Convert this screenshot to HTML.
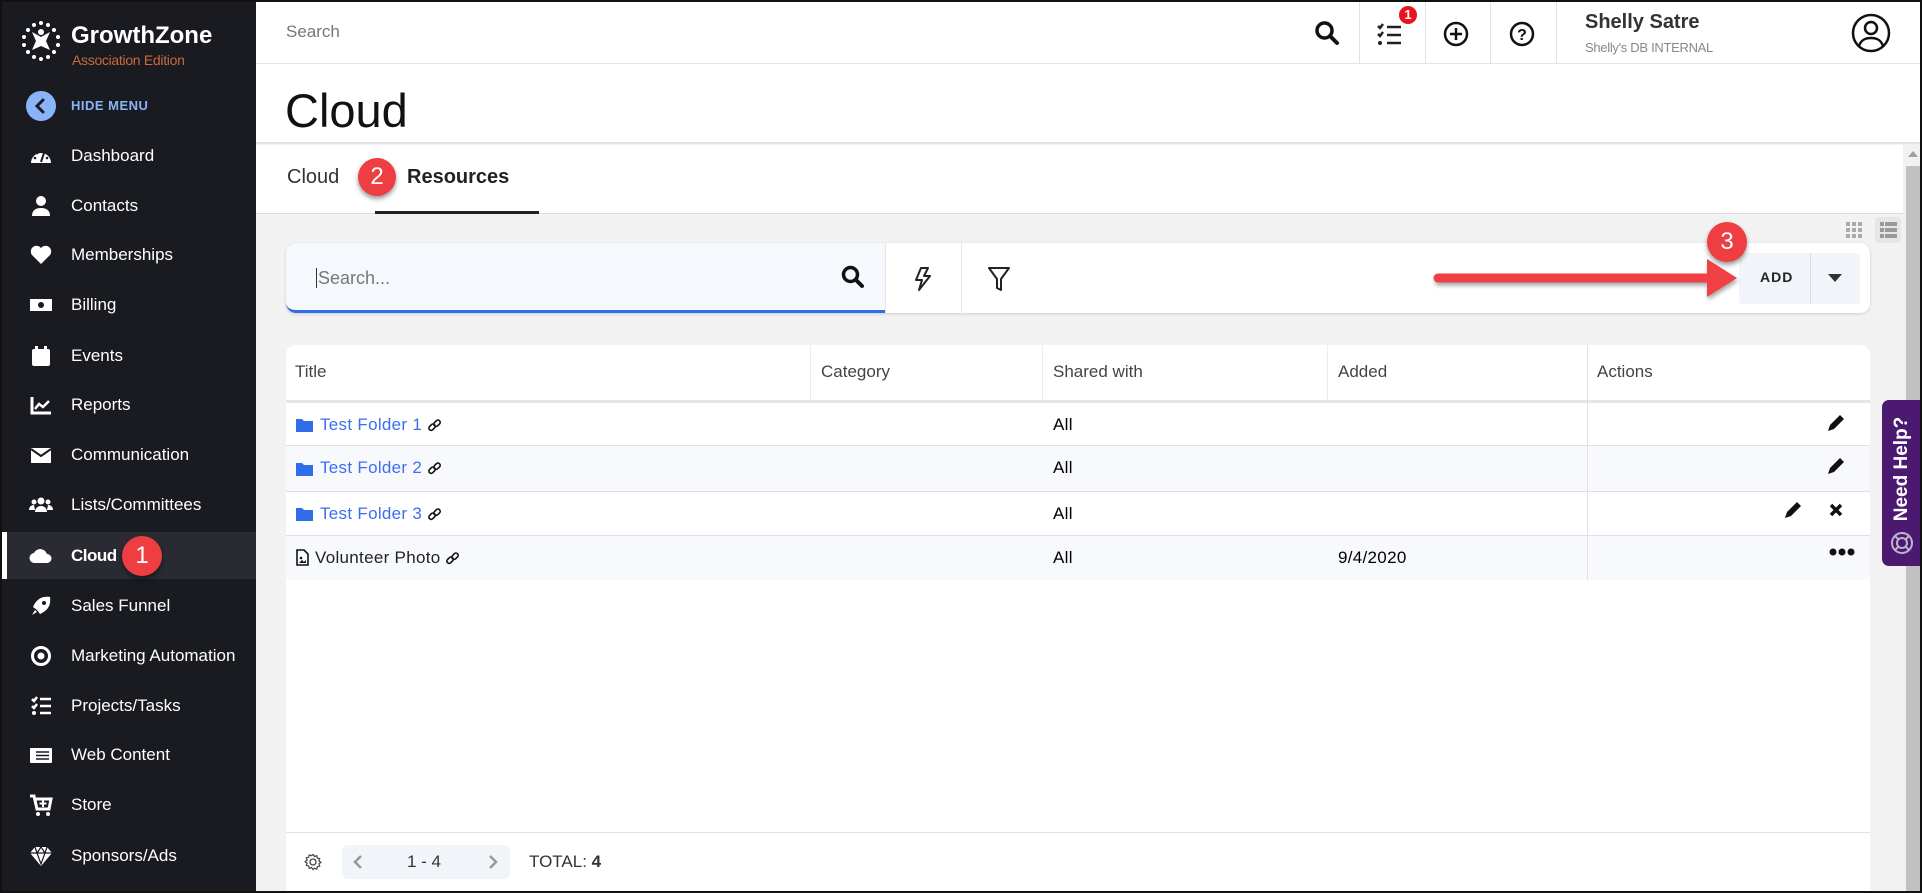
<!DOCTYPE html>
<html><head><meta charset="utf-8"><style>
*{box-sizing:border-box;margin:0;padding:0}
body{width:1922px;height:893px;overflow:hidden;font-family:"Liberation Sans",sans-serif;background:#f2f2f2;position:relative}
.abs{position:absolute}
#frame{position:absolute;left:0;top:0;width:1922px;height:893px;border:2px solid #111;pointer-events:none;z-index:50}
#side{left:0;top:0;width:256px;height:893px;background:#1a1b21;color:#fff}
.mi{position:absolute;left:0;width:256px;height:48px;display:flex;align-items:center;font-size:17px;color:#fff}
.mi svg{position:absolute;left:29px;width:24px;height:24px}
.mi span{position:absolute;left:71px}
.badge{position:absolute;border-radius:50%;background:#ef3e42;color:#fff;display:flex;align-items:center;justify-content:center;font-size:24px;box-shadow:0 3px 5px rgba(0,0,0,.4)}
.row{position:absolute;left:286px;width:1584px;height:44px;border-bottom:1px solid #dde0e4;font-size:17px}
.row .t{position:absolute;top:12px;letter-spacing:.3px;display:flex;align-items:center;white-space:nowrap}
.row .t svg{margin-left:5px}
.lnk{color:#3b6ef0}
.vd{position:absolute;width:1px;background:#e1e1e1}
</style></head><body>
<div id="frame"></div>
<div id="side" class="abs">
  <svg class="abs" style="left:20px;top:20px" width="42" height="42" viewBox="0 0 42 42"><g fill="#fff"><circle cx="21" cy="3" r="2"/><circle cx="28" cy="5" r="2"/><circle cx="14" cy="5" r="2"/><circle cx="34" cy="10" r="2"/><circle cx="8" cy="10" r="2"/><circle cx="38" cy="17" r="2"/><circle cx="4" cy="17" r="2"/><circle cx="38" cy="25" r="2"/><circle cx="4" cy="25" r="2"/><circle cx="34" cy="32" r="2"/><circle cx="8" cy="32" r="2"/><circle cx="28" cy="37" r="2"/><circle cx="14" cy="37" r="2"/><circle cx="21" cy="39" r="2"/><path d="M12 12 L21 17 L30 12 L26 21 L30 30 L21 26 L12 30 L16 21Z"/><circle cx="21" cy="12" r="3"/></g></svg>
  <div class="abs" style="left:71px;top:22px;font-size:24px;font-weight:bold;color:#fff">GrowthZone</div>
  <div class="abs" style="left:72px;top:52px;font-size:14px;color:#c8693a;letter-spacing:-.3px">Association Edition</div>
  <div class="abs" style="left:26px;top:91px;width:30px;height:30px;border-radius:50%;background:#8ab4f8"><svg width="30" height="30"><path d="M17 9 L11 15 L17 21" stroke="#1a1b21" stroke-width="3" fill="none" stroke-linecap="round"/></svg></div>
  <div class="abs" style="left:71px;top:98px;font-size:13px;font-weight:bold;color:#8ab4f8;letter-spacing:.5px">HIDE MENU</div>

  <div class="mi" style="top:132px"><svg viewBox="0 0 24 24"><path d="M2 19a10 10 0 1 1 20 0z" fill="#fff"/><path d="M12 18 L15 9" stroke="#1a1b21" stroke-width="2"/><circle cx="6" cy="14" r="1.3" fill="#1a1b21"/><circle cx="8" cy="9" r="1.3" fill="#1a1b21"/><circle cx="18" cy="14" r="1.3" fill="#1a1b21"/></svg><span>Dashboard</span></div>
  <div class="mi" style="top:182px"><svg viewBox="0 0 24 24"><circle cx="12" cy="7" r="5" fill="#fff"/><path d="M3 22c0-6 4-8 9-8s9 2 9 8z" fill="#fff"/></svg><span>Contacts</span></div>
  <div class="mi" style="top:231px"><svg viewBox="0 0 24 24"><path d="M12 21 L3 12 A5 5 0 0 1 12 5 A5 5 0 0 1 21 12Z" fill="#fff"/></svg><span>Memberships</span></div>
  <div class="mi" style="top:281px"><svg viewBox="0 0 24 24"><rect x="1" y="6" width="22" height="12" fill="#fff"/><circle cx="12" cy="12" r="3" fill="#1a1b21"/></svg><span>Billing</span></div>
  <div class="mi" style="top:332px"><svg viewBox="0 0 24 24"><rect x="3" y="5" width="18" height="17" rx="2" fill="#fff"/><rect x="6" y="2" width="3" height="5" fill="#fff"/><rect x="15" y="2" width="3" height="5" fill="#fff"/></svg><span>Events</span></div>
  <div class="mi" style="top:381px"><svg viewBox="0 0 24 24"><path d="M3 4 V20 H22" stroke="#fff" stroke-width="3" fill="none"/><path d="M6 16 L10 11 L14 14 L20 8" stroke="#fff" stroke-width="2.5" fill="none"/></svg><span>Reports</span></div>
  <div class="mi" style="top:431px"><svg viewBox="0 0 24 24"><rect x="2" y="5" width="20" height="15" fill="#fff"/><path d="M2 6 L12 13 L22 6" stroke="#1a1b21" stroke-width="2" fill="none"/></svg><span>Communication</span></div>
  <div class="mi" style="top:481px"><svg viewBox="0 0 24 24"><g fill="#fff"><circle cx="12" cy="8" r="3.5"/><circle cx="5" cy="9" r="2.5"/><circle cx="19" cy="9" r="2.5"/><path d="M6 19c0-4 3-6 6-6s6 2 6 6z"/><path d="M0 17c0-3 2-5 5-5l1 5z"/><path d="M24 17c0-3-2-5-5-5l-1 5z"/></g></svg><span>Lists/Committees</span></div>
  <div class="mi" style="top:532px;background:#2a2b32;height:47px"><div class="abs" style="left:2px;top:0;width:5px;height:47px;background:#fff"></div><svg viewBox="0 0 24 24"><path d="M6 19a5 5 0 0 1-1-10 7 7 0 0 1 13 1 4.5 4.5 0 0 1 0 9z" fill="#fff"/></svg><span style="font-weight:bold;letter-spacing:-.5px">Cloud</span></div>
  <div class="badge" style="left:122px;top:536px;width:40px;height:40px">1</div>
  <div class="mi" style="top:582px"><svg viewBox="0 0 24 24"><path d="M8 16 L4 13 C8 4 14 2 21 3 C22 10 20 16 11 20Z M3 21 L6 16 L8 18Z" fill="#fff"/><circle cx="15" cy="9" r="2" fill="#1a1b21"/></svg><span>Sales Funnel</span></div>
  <div class="mi" style="top:632px"><svg viewBox="0 0 24 24"><circle cx="12" cy="12" r="8.5" stroke="#fff" stroke-width="3" fill="none"/><circle cx="12" cy="12" r="3.5" fill="#fff"/></svg><span>Marketing Automation</span></div>
  <div class="mi" style="top:682px"><svg viewBox="0 0 24 24"><g stroke="#fff" stroke-width="2.5" fill="none"><path d="M3 5 L5 7 L8 3"/><path d="M3 12 L5 14 L8 10"/><path d="M11 5H22M11 12H22M11 19H22"/></g><circle cx="5" cy="19" r="2" fill="#fff"/></svg><span>Projects/Tasks</span></div>
  <div class="mi" style="top:731px"><svg viewBox="0 0 24 24"><rect x="1" y="5" width="22" height="15" rx="1" fill="#fff"/><path d="M7 9H20M7 12.5H20M7 16H20" stroke="#1a1b21" stroke-width="1.5"/></svg><span>Web Content</span></div>
  <div class="mi" style="top:781px"><svg viewBox="0 0 24 24"><path d="M1 3H5L8 16H20L22 6H6" stroke="#fff" stroke-width="3" fill="none"/><circle cx="9" cy="21" r="2" fill="#fff"/><circle cx="19" cy="21" r="2" fill="#fff"/><path d="M14 7V14M10.5 10.5H17.5" stroke="#fff" stroke-width="2"/></svg><span>Store</span></div>
  <div class="mi" style="top:832px"><svg viewBox="0 0 24 24"><path d="M6 3H18L23 9L12 22L1 9Z" fill="#fff"/><path d="M1 9H23M8 9L12 20L16 9M6 3L8 9L12 3L16 9L18 3" stroke="#1a1b21" stroke-width="1.2" fill="none"/></svg><span>Sponsors/Ads</span></div>
</div>

<!-- top bar -->
<div class="abs" style="left:256px;top:0;width:1666px;height:64px;background:#fff;border-bottom:1px solid #e4e4e4"></div>
<div class="abs" style="left:286px;top:22px;font-size:17px;color:#777">Search</div>
<svg class="abs" style="left:1314px;top:20px" width="26" height="26" viewBox="0 0 26 26"><circle cx="10.5" cy="10.5" r="7.5" stroke="#111" stroke-width="3.5" fill="none"/><path d="M16 16 L23 23" stroke="#111" stroke-width="4" stroke-linecap="round"/></svg>
<div class="vd" style="left:1359px;top:0;height:64px"></div>
<svg class="abs" style="left:1376px;top:22px" width="28" height="26" viewBox="0 0 28 26"><g stroke="#222" stroke-width="2.5" fill="none"><path d="M2 4 L4 6 L7 2"/><path d="M2 12 L4 14 L7 10"/><path d="M11 5H25M11 13H25M11 21H25"/></g><circle cx="4" cy="21" r="2" fill="#222"/></svg>
<div class="abs" style="left:1399px;top:6px;width:18px;height:18px;border-radius:50%;background:#e8141a;color:#fff;font-size:13px;font-weight:bold;text-align:center;line-height:18px">1</div>
<div class="vd" style="left:1425px;top:0;height:64px"></div>
<svg class="abs" style="left:1443px;top:21px" width="26" height="26"><circle cx="13" cy="13" r="11" stroke="#111" stroke-width="2.5" fill="none"/><path d="M13 7V19M7 13H19" stroke="#111" stroke-width="2.5"/></svg>
<div class="vd" style="left:1490px;top:0;height:64px"></div>
<svg class="abs" style="left:1509px;top:21px" width="26" height="26"><circle cx="13" cy="13" r="11" stroke="#111" stroke-width="2.5" fill="none"/><text x="13" y="19" font-size="16" font-weight="bold" text-anchor="middle" font-family="Liberation Sans" fill="#111">?</text></svg>
<div class="vd" style="left:1556px;top:0;height:64px"></div>
<div class="abs" style="left:1585px;top:11px;font-size:20px;font-weight:bold;color:#333">Shelly Satre</div>
<div class="abs" style="left:1585px;top:40px;font-size:13px;color:#888;letter-spacing:-.3px">Shelly's DB INTERNAL</div>
<svg class="abs" style="left:1851px;top:13px" width="40" height="40"><circle cx="20" cy="20" r="18" stroke="#111" stroke-width="2.5" fill="none"/><circle cx="20" cy="15" r="6" stroke="#111" stroke-width="2.5" fill="none"/><path d="M8 33c2-6 6-8 12-8s10 2 12 8" stroke="#111" stroke-width="2.5" fill="none"/></svg>

<!-- title -->
<div class="abs" style="left:256px;top:64px;width:1666px;height:80px;background:#fff;border-bottom:2px solid #e2e2e2"></div>
<div class="abs" style="left:285px;top:83px;font-size:47px;color:#111">Cloud</div>
<!-- tabs -->
<div class="abs" style="left:256px;top:145px;width:1647px;height:69px;background:#fff;border-bottom:1px solid #ddd"></div>
<div class="abs" style="left:287px;top:166px;font-size:20px;color:#333">Cloud</div>
<div class="badge" style="left:358px;top:158px;width:38px;height:38px">2</div>
<div class="abs" style="left:407px;top:166px;font-size:20px;color:#222;font-weight:bold">Resources</div>
<div class="abs" style="left:375px;top:211px;width:164px;height:3px;background:#222"></div>

<!-- scrollbar -->
<div class="abs" style="left:1903px;top:144px;width:19px;height:749px;background:#f1f1f1"></div>
<div class="abs" style="left:1906px;top:166px;width:14px;height:727px;background:#c1c1c1"></div>
<div class="abs" style="left:1908px;top:151px;width:0;height:0;border-left:5px solid transparent;border-right:5px solid transparent;border-bottom:6px solid #a0a0a0"></div>
<!-- view toggles -->
<svg class="abs" style="left:1846px;top:222px" width="16" height="16"><g fill="#aaa"><rect x="0" y="0" width="4" height="4"/><rect x="6" y="0" width="4" height="4"/><rect x="12" y="0" width="4" height="4"/><rect x="0" y="6" width="4" height="4"/><rect x="6" y="6" width="4" height="4"/><rect x="12" y="6" width="4" height="4"/><rect x="0" y="12" width="4" height="4"/><rect x="6" y="12" width="4" height="4"/><rect x="12" y="12" width="4" height="4"/></g></svg>
<div class="abs" style="left:1875px;top:217px;width:26px;height:26px;background:#e6e6e6;border-radius:3px"></div>
<svg class="abs" style="left:1880px;top:222px" width="17" height="16"><g fill="#999"><rect x="0" y="0" width="4" height="4"/><rect x="5" y="0" width="12" height="4"/><rect x="0" y="6" width="4" height="4"/><rect x="5" y="6" width="12" height="4"/><rect x="0" y="12" width="4" height="4"/><rect x="5" y="12" width="12" height="4"/></g></svg>

<!-- toolbar -->
<div class="abs" style="left:286px;top:243px;width:1584px;height:70px;background:#fff;border-radius:10px;box-shadow:0 1px 3px rgba(0,0,0,.15)"></div>
<div class="abs" style="left:286px;top:243px;width:599px;height:70px;background:#f5f8fc;border-radius:10px 0 0 10px;border-bottom:3px solid #2f6ee8"></div>
<div class="abs" style="left:316px;top:268px;font-size:18px;color:#777;border-left:1px solid #333;padding-left:1px;line-height:20px">Search...</div>
<svg class="abs" style="left:840px;top:264px" width="26" height="26"><circle cx="10.5" cy="10.5" r="7" stroke="#111" stroke-width="3.5" fill="none"/><path d="M16 16 L22 22" stroke="#111" stroke-width="4" stroke-linecap="round"/></svg>
<div class="vd" style="left:885px;top:243px;height:70px;background:#e6e6e6"></div>
<svg class="abs" style="left:913px;top:266px" width="20" height="26" viewBox="0 0 20 26"><path d="M8 2 L15 2 L11 10 L17 10 L6 24 L9 14 L3 14 Z" stroke="#222" stroke-width="2" fill="none" stroke-linejoin="round"/></svg>
<div class="vd" style="left:961px;top:243px;height:70px;background:#e6e6e6"></div>
<svg class="abs" style="left:987px;top:265px" width="24" height="28" viewBox="0 0 24 28"><path d="M2 3 H22 L14 14 V25 L10 23 V14 Z" stroke="#222" stroke-width="2" fill="none" stroke-linejoin="round"/></svg>
<div class="abs" style="left:1739px;top:253px;width:121px;height:51px;background:#f1f4f8;border-radius:3px"></div>
<div class="abs" style="left:1760px;top:269px;font-size:14px;font-weight:bold;color:#222;letter-spacing:1px">ADD</div>
<div class="vd" style="left:1810px;top:253px;height:51px;background:#d8dbe0"></div>
<div class="abs" style="left:1828px;top:274px;width:0;height:0;border-left:7px solid transparent;border-right:7px solid transparent;border-top:8px solid #333"></div>
<!-- arrow -->
<svg class="abs" style="left:1430px;top:255px;filter:drop-shadow(1px 3px 2px rgba(0,0,0,.35))" width="312" height="50"><path d="M8 23 L281 23" stroke="#f04044" stroke-width="9" stroke-linecap="round"/><path d="M277 4 L307 23 L277 42 Z" fill="#f04044"/></svg>
<div class="badge" style="left:1707px;top:222px;width:40px;height:40px">3</div>

<!-- table -->
<div class="abs" style="left:286px;top:345px;width:1584px;height:548px;background:#fff;border-radius:10px 10px 0 0"></div>
<div class="abs" style="left:286px;top:400px;width:1584px;height:3px;background:#e6e6e6"></div>
<div class="abs" style="left:295px;top:362px;font-size:17px;color:#444">Title</div>
<div class="abs" style="left:821px;top:362px;font-size:17px;color:#444">Category</div>
<div class="abs" style="left:1053px;top:362px;font-size:17px;color:#444">Shared with</div>
<div class="abs" style="left:1338px;top:362px;font-size:17px;color:#444">Added</div>
<div class="abs" style="left:1597px;top:362px;font-size:17px;color:#444">Actions</div>
<div class="vd" style="left:810px;top:345px;height:56px;background:#ececec"></div>
<div class="vd" style="left:1042px;top:345px;height:56px;background:#ececec"></div>
<div class="vd" style="left:1327px;top:345px;height:56px;background:#ececec"></div>

<div class="row" style="top:403px;height:43px;background:#fff"><svg class="abs" style="left:10px;top:15px" width="17" height="14"><path d="M0 1h6l2 2h9v11H0z" fill="#2f6ee8"/></svg><span class="t lnk" style="left:34px">Test Folder 1<svg width="15" height="15" viewBox="0 0 15 15"><g stroke="#111" stroke-width="1.6" fill="none"><rect x="1.5" y="7" width="7" height="4.5" rx="2.2" transform="rotate(-45 5 9.2)"/><rect x="6.5" y="3" width="7" height="4.5" rx="2.2" transform="rotate(-45 10 5.2)"/></g></svg></span><span class="t" style="left:767px">All</span></div>
<div class="row" style="top:446px;height:46px;background:#f7f9fc"><svg class="abs" style="left:10px;top:16px" width="17" height="14"><path d="M0 1h6l2 2h9v11H0z" fill="#2f6ee8"/></svg><span class="t lnk" style="left:34px">Test Folder 2<svg width="15" height="15" viewBox="0 0 15 15"><g stroke="#111" stroke-width="1.6" fill="none"><rect x="1.5" y="7" width="7" height="4.5" rx="2.2" transform="rotate(-45 5 9.2)"/><rect x="6.5" y="3" width="7" height="4.5" rx="2.2" transform="rotate(-45 10 5.2)"/></g></svg></span><span class="t" style="left:767px">All</span></div>
<div class="row" style="top:492px;height:44px;background:#fff"><svg class="abs" style="left:10px;top:15px" width="17" height="14"><path d="M0 1h6l2 2h9v11H0z" fill="#2f6ee8"/></svg><span class="t lnk" style="left:34px">Test Folder 3<svg width="15" height="15" viewBox="0 0 15 15"><g stroke="#111" stroke-width="1.6" fill="none"><rect x="1.5" y="7" width="7" height="4.5" rx="2.2" transform="rotate(-45 5 9.2)"/><rect x="6.5" y="3" width="7" height="4.5" rx="2.2" transform="rotate(-45 10 5.2)"/></g></svg></span><span class="t" style="left:767px">All</span></div>
<div class="row" style="top:536px;height:44px;background:#f7f9fc;border-bottom:none"><svg class="abs" style="left:10px;top:13px" width="13" height="17"><path d="M1 1h7l4 4v11H1z" stroke="#111" stroke-width="1.6" fill="none"/><circle cx="5" cy="9" r="1.3" fill="#111"/><path d="M3 14l3-3 2 2 2-2v3z" fill="#111"/></svg><span class="t" style="left:29px;color:#222">Volunteer Photo<svg width="15" height="15" viewBox="0 0 15 15"><g stroke="#111" stroke-width="1.6" fill="none"><rect x="1.5" y="7" width="7" height="4.5" rx="2.2" transform="rotate(-45 5 9.2)"/><rect x="6.5" y="3" width="7" height="4.5" rx="2.2" transform="rotate(-45 10 5.2)"/></g></svg></span><span class="t" style="left:767px">All</span><span class="t" style="left:1052px">9/4/2020</span></div>
<div class="vd" style="left:1587px;top:345px;height:235px;background:#e1e1e1"></div>

<svg class="abs" style="left:1826px;top:413px" width="20" height="20"><path d="M2 18 L4 12 L14 2 L18 6 L8 16 Z" fill="#111"/></svg>
<svg class="abs" style="left:1826px;top:456px" width="20" height="20"><path d="M2 18 L4 12 L14 2 L18 6 L8 16 Z" fill="#111"/></svg>
<svg class="abs" style="left:1783px;top:500px" width="20" height="20"><path d="M2 18 L4 12 L14 2 L18 6 L8 16 Z" fill="#111"/></svg>
<svg class="abs" style="left:1828px;top:502px" width="16" height="16"><path d="M3 3 L13 13 M13 3 L3 13" stroke="#111" stroke-width="3.5"/></svg>
<svg class="abs" style="left:1829px;top:548px" width="26" height="8"><circle cx="4" cy="4" r="3.5" fill="#111"/><circle cx="13" cy="4" r="3.5" fill="#111"/><circle cx="22" cy="4" r="3.5" fill="#111"/></svg>

<!-- need help -->
<div class="abs" style="left:1882px;top:400px;width:40px;height:166px;background:#4b1a70;border-radius:7px 0 0 7px"></div>
<div class="abs" style="left:1839px;top:457px;width:126px;height:24px;transform:rotate(-90deg);color:#fff;font-weight:bold;font-size:19px;text-align:center;line-height:24px">Need Help?</div>
<svg class="abs" style="left:1889px;top:530px" width="26" height="26"><circle cx="13" cy="13" r="10" stroke="#bfb2d0" stroke-width="2" fill="none"/><circle cx="13" cy="13" r="5" stroke="#bfb2d0" stroke-width="2" fill="none"/><path d="M6 6l4 4M20 6l-4 4M6 20l4-4M20 20l-4-4" stroke="#bfb2d0" stroke-width="2"/></svg>

<!-- footer -->
<div class="abs" style="left:286px;top:832px;width:1584px;height:1px;background:#e3e3e3"></div>
<svg class="abs" style="left:304px;top:853px" width="18" height="18" viewBox="0 0 18 18"><circle cx="9" cy="9" r="3" stroke="#444" stroke-width="1.3" fill="none"/><path d="M9 1.5l1.5 2 2.3-.8.5 2.4 2.4.5-.8 2.3 2 1.5-2 1.5.8 2.3-2.4.5-.5 2.4-2.3-.8L9 16.5l-1.5-2-2.3.8-.5-2.4-2.4-.5.8-2.3-2-1.5 2-1.5-.8-2.3 2.4-.5.5-2.4 2.3.8z" stroke="#444" stroke-width="1.2" fill="none"/></svg>
<div class="abs" style="left:342px;top:845px;width:168px;height:34px;background:#f1f4f8;border-radius:6px"></div>
<svg class="abs" style="left:352px;top:854px" width="12" height="16"><path d="M9 2 L3 8 L9 14" stroke="#999" stroke-width="2.5" fill="none"/></svg>
<svg class="abs" style="left:487px;top:854px" width="12" height="16"><path d="M3 2 L9 8 L3 14" stroke="#999" stroke-width="2.5" fill="none"/></svg>
<div class="abs" style="left:407px;top:852px;font-size:17px;color:#333">1 - 4</div>
<div class="abs" style="left:529px;top:852px;font-size:17px;color:#333">TOTAL: <b>4</b></div>
</body></html>
